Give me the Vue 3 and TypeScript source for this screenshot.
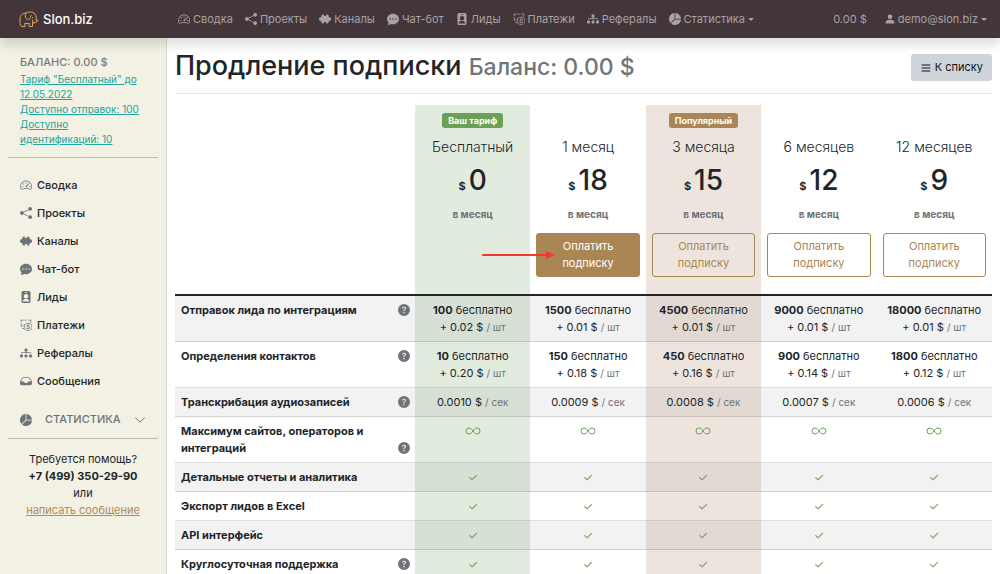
<script setup lang="ts">
import { h, type FunctionalComponent } from 'vue'

interface NavItem {
  icon: string
  label: string
}

interface Plan {
  title: string
  price: string
  badge?: string
  tone?: 'current' | 'popular'
  button?: 'solid' | 'outline'
}

interface Cell {
  amount?: string
  price?: string
  unit?: string
  icon?: string
}

interface Feature {
  title: string
  help?: boolean
  cells: Cell[]
}

const icons: Record<string, string> = {
  gauge:
    'M8 4a.5.5 0 0 1 .5.5V6a.5.5 0 0 1-1 0V4.5A.5.5 0 0 1 8 4zM3.732 5.732a.5.5 0 0 1 .707 0l.915.914a.5.5 0 1 1-.708.708l-.914-.915a.5.5 0 0 1 0-.707zM2 10a.5.5 0 0 1 .5-.5h1.586a.5.5 0 0 1 0 1H2.5A.5.5 0 0 1 2 10zm9.5 0a.5.5 0 0 1 .5-.5h1.5a.5.5 0 0 1 0 1H12a.5.5 0 0 1-.5-.5zm.754-4.246a.389.389 0 0 0-.527-.02L7.547 9.31a.91.91 0 1 0 1.302 1.258l3.434-4.297a.389.389 0 0 0-.029-.518zM0 10a8 8 0 1 1 15.547 2.661c-.442 1.253-1.845 1.602-2.932 1.25C11.309 13.488 9.475 13 8 13c-1.474 0-3.31.488-4.615.911-1.087.352-2.49.003-2.932-1.25A7.988 7.988 0 0 1 0 10zm8-7a7 7 0 0 0-6.603 9.329c.203.575.923.876 1.68.63C4.397 12.533 6.358 12 8 12s3.604.532 4.923.96c.757.245 1.477-.056 1.68-.631A7 7 0 0 0 8 3z',
  share:
    'M11 2.5a2.5 2.5 0 1 1 .603 1.628l-6.718 3.12a2.499 2.499 0 0 1 0 1.504l6.718 3.12a2.5 2.5 0 1 1-.488.876l-6.718-3.12a2.5 2.5 0 1 1 0-3.256l6.718-3.12A2.5 2.5 0 0 1 11 2.5z',
  puzzle:
    'M3 3.5 4.5 2h2v1.5c0 .7 3 .7 3 0V2h2L13 3.500v2h1.500c2 0 2 5 0 5H13v2L11.500 14h-2v-1.500c0-.7-3-.7-3 0V14h-2L3 12.500v-2H1.500c-2 0-2-5 0-5H3z',
  chat:
    'M16 8c0 3.866-3.582 7-8 7a9.06 9.06 0 0 1-2.347-.306c-.584.296-1.925.864-4.181 1.234-.2.032-.352-.176-.273-.362.354-.836.674-1.95.77-2.966C.744 11.37 0 9.76 0 8c0-3.866 3.582-7 8-7s8 3.134 8 7zM5 8a1 1 0 1 0-2 0 1 1 0 0 0 2 0zm4 0a1 1 0 1 0-2 0 1 1 0 0 0 2 0zm3 1a1 1 0 1 0 0-2 1 1 0 0 0 0 2z',
  lead:
    'M4 0a2 2 0 0 0-2 2v12a2 2 0 0 0 2 2h8a2 2 0 0 0 2-2V2a2 2 0 0 0-2-2H4zm2.500 1.500h3v1h-3zM8 4a3 3 0 1 1 0 6 3 3 0 0 1 0-6zm-4.500 9.500c.3-2.200 2.200-3 4.500-3s4.200.8 4.500 3v.5h-9z',
  payments:
    'M1 1h4v1H2v2H1zM6 1h3v1H6zM11 1h4v4h-1V2h-3zM1 5h1v4h3v1H1zM5 7h2v1H5zM6 11l2 1-2 2v-1H3v-1h3zM11 5a5.500 5.500 0 1 1 0 11 5.500 5.500 0 0 1 0-11zm0 1a4.500 4.500 0 1 0 0 9 4.500 4.500 0 0 0 0-9zm-.5.8h1v.8c1 .1 1.600.7 1.700 1.500h-1c-.2-.8-2.400-.8-2.400.2 0 1.200 3.600.3 3.600 2.500 0 1-.8 1.500-1.900 1.600v.8h-1v-.8c-1.100-.1-1.900-.7-2-1.700h1c.2 1.200 2.800 1.100 2.800.1 0-1.200-3.500-.4-3.500-2.500 0-.9.700-1.500 1.700-1.700z',
  tree:
    'M6 3.500A1.500 1.500 0 0 1 7.500 2h1A1.500 1.500 0 0 1 10 3.500v1A1.500 1.500 0 0 1 8.500 6v1H14a.5.5 0 0 1 .5.5v1a.5.5 0 0 1-1 0V8h-5v.5a.5.5 0 0 1-1 0V8h-5v.5a.5.5 0 0 1-1 0v-1A.5.5 0 0 1 2 7h5.500V6A1.500 1.500 0 0 1 6 4.500v-1zm-6 8A1.500 1.500 0 0 1 1.500 10h1A1.500 1.500 0 0 1 4 11.500v1A1.500 1.500 0 0 1 2.500 14h-1A1.500 1.500 0 0 1 0 12.500v-1zm6 0A1.500 1.500 0 0 1 7.500 10h1a1.500 1.500 0 0 1 1.500 1.500v1A1.500 1.500 0 0 1 8.500 14h-1A1.500 1.500 0 0 1 6 12.500v-1zm6 0a1.500 1.500 0 0 1 1.500-1.500h1a1.500 1.500 0 0 1 1.500 1.500v1a1.500 1.500 0 0 1-1.500 1.500h-1a1.500 1.500 0 0 1-1.500-1.500v-1z',
  pie:
    'M15.985 8.500H8.207l-5.500 5.500a8 8 0 0 0 13.277-5.500zM2 13.292A8 8 0 0 1 7.500.015v7.778l-5.500 5.500zM8.500.015V7.500h7.485A8.001 8.001 0 0 0 8.500.015z',
  inbox:
    'M4.500 3h7c.6 0 1.200.3 1.600.8L16 8.500V11a2.500 2.500 0 0 1-2.500 2.500h-11A2.500 2.500 0 0 1 0 11V8.500l2.900-4.700C3.300 3.300 3.900 3 4.500 3zm0 1c-.3 0-.6.1-.8.4L1.300 8.500h3.200c.7 0 .8.4 1 .8.8 1.800 4.200 1.800 5 0 .2-.4.3-.8 1-.8h3.200l-2.400-4.100c-.2-.3-.5-.4-.8-.4z',
  user:
    'M3 14s-1 0-1-1 1-4 6-4 6 3 6 4-1 1-1 1H3zm5-6a3 3 0 1 0 0-6 3 3 0 0 0 0 6z',
  list:
    'M2 12a.6.6 0 0 1 .6-.6h10.800a.6.6 0 0 1 0 1.200H2.600A.6.6 0 0 1 2 12zm0-4a.6.6 0 0 1 .6-.6h10.800a.6.6 0 0 1 0 1.200H2.600A.6.6 0 0 1 2 8zm0-4a.6.6 0 0 1 .6-.6h10.800a.6.6 0 0 1 0 1.200H2.600A.6.6 0 0 1 2 4z',
  help:
    'M16 8A8 8 0 1 1 0 8a8 8 0 0 1 16 0zM5.496 6.033h.825c.138 0 .248-.113.266-.25.09-.656.54-1.134 1.342-1.134.686 0 1.314.343 1.314 1.168 0 .635-.374.927-.965 1.371-.673.489-1.206 1.060-1.168 1.987l.003.217a.25.25 0 0 0 .25.246h.811a.25.25 0 0 0 .25-.25v-.105c0-.718.273-.927 1.010-1.486.609-.463 1.244-.977 1.244-2.056 0-1.511-1.276-2.241-2.673-2.241-1.267 0-2.655.59-2.750 2.286a.237.237 0 0 0 .241.247zm2.325 6.443c.61 0 1.029-.394 1.029-.927 0-.552-.42-.94-1.029-.94-.584 0-1.009.388-1.009.94 0 .533.425.927 1.010.927z',
  check:
    'M13.854 3.646a.5.5 0 0 1 0 .708l-7 7a.5.5 0 0 1-.708 0l-3.500-3.500a.5.5 0 1 1 .708-.708L6.500 10.293l6.646-6.647a.5.5 0 0 1 .708 0z',
  down:
    'M1.646 4.646a.5.5 0 0 1 .708 0L8 10.293l5.646-5.647a.5.5 0 0 1 .708.708l-6 6a.5.5 0 0 1-.708 0l-6-6a.5.5 0 0 1 0-.708z',
}

const Icon: FunctionalComponent<{ name: string }> = (props) =>
  h('svg', { viewBox: '0 0 16 16', fill: 'currentColor', 'aria-hidden': 'true' }, [
    h('path', { d: icons[props.name], 'fill-rule': 'evenodd' }),
  ])
Icon.props = ['name']

const sections: NavItem[] = [
  { icon: 'gauge', label: 'Сводка' },
  { icon: 'share', label: 'Проекты' },
  { icon: 'puzzle', label: 'Каналы' },
  { icon: 'chat', label: 'Чат-бот' },
  { icon: 'lead', label: 'Лиды' },
  { icon: 'payments', label: 'Платежи' },
  { icon: 'tree', label: 'Рефералы' },
]
const sideItems: NavItem[] = [...sections, { icon: 'inbox', label: 'Сообщения' }]

const plans: Plan[] = [
  { title: 'Бесплатный', price: '0', badge: 'Ваш тариф', tone: 'current' },
  { title: '1 месяц', price: '18', button: 'solid' },
  { title: '3 месяца', price: '15', badge: 'Популярный', tone: 'popular', button: 'outline' },
  { title: '6 месяцев', price: '12', button: 'outline' },
  { title: '12 месяцев', price: '9', button: 'outline' },
]

const priced = (unit: string, prices: string[], amounts: string[] = []): Cell[] =>
  prices.map((price, i) => ({ price, unit, amount: amounts[i] }))
const marks = (icon: string): Cell[] => plans.map(() => ({ icon }))

const features: Feature[] = [
  {
    title: 'Отправок лида по интеграциям',
    help: true,
    cells: priced('шт', ['0.02', '0.01', '0.01', '0.01', '0.01'], ['100', '1500', '4500', '9000', '18000']),
  },
  {
    title: 'Определения контактов',
    help: true,
    cells: priced('шт', ['0.20', '0.18', '0.16', '0.14', '0.12'], ['10', '150', '450', '900', '1800']),
  },
  {
    title: 'Транскрибация аудиозаписей',
    help: true,
    cells: priced('сек', ['0.0010', '0.0009', '0.0008', '0.0007', '0.0006']),
  },
  { title: 'Максимум сайтов, операторов и интеграций', help: true, cells: marks('infinity') },
  { title: 'Детальные отчеты и аналитика', cells: marks('check') },
  { title: 'Экспорт лидов в Excel', cells: marks('check') },
  { title: 'API интерфейс', cells: marks('check') },
  { title: 'Круглосуточная поддержка', help: true, cells: marks('check') },
]
</script>

<template>
  <div class="page">
    <header class="navbar">
      <a class="brand" href="#">
        <svg class="logo" viewBox="0 0 20 17" fill="none" stroke="currentColor" stroke-width="1" stroke-linecap="round" stroke-linejoin="round" aria-hidden="true">
          <path d="M7 2C3.500 2 1 4.500 1 8v3.500c0 2 .8 3.500 2 4h3v-3.500c1.200.8 3 .8 4.200 0v3.500h3.300v-4c2 .8 4.500.3 4.500-1.500M7 2c2-1.500 7-1.500 9 1 1.500 2 1.200 4 1.200 6M7 2c-1 1.500-1 4 .2 5.500 1.500 1.800 4 1 4.200-1 .1-1 0-1.500 1-2" />
          <path d="M13.500 6.500v.2M17.200 9c.3 1.500 1.800 1.200 2 .2M13.500 9c-.2 1.500.5 2.500 2 2.500" />
        </svg>
        Slon.biz
      </a>
      <nav class="top-nav">
        <a v-for="item in sections" :key="item.label" href="#"><Icon class="icon" :name="item.icon" />{{ item.label }}</a>
        <a href="#"><Icon class="icon" name="pie" />Статистика<i class="caret"></i></a>
      </nav>
      <div class="account">
        <a href="#">0.00 $</a>
        <a href="#"><Icon class="icon user" name="user" />demo@slon.biz<i class="caret"></i></a>
      </div>
    </header>

    <div class="body">
      <aside class="sidebar">
        <div class="balance">
          <div class="balance-title">БАЛАНС: 0.00 $</div>
          <a href="#">Тариф "Бесплатный" до 12.05.2022</a>
          <a href="#">Доступно отправок: 100</a>
          <a href="#">Доступно идентификаций: 10</a>
        </div>
        <nav class="side-nav">
          <a v-for="item in sideItems" :key="item.label" href="#"><Icon class="icon" :name="item.icon" />{{ item.label }}</a>
        </nav>
        <button class="stats" type="button">
          <Icon class="icon" name="pie" />
          <span>СТАТИСТИКА</span>
          <Icon class="icon" name="down" />
        </button>
        <div class="support">
          <div>Требуется помощь?</div>
          <strong>+7 (499) 350-29-90</strong>
          <div>или</div>
          <a href="#">написать сообщение</a>
        </div>
      </aside>

      <main class="content">
        <div class="heading">
          <h1>Продление подписки <small>Баланс: 0.00 $</small></h1>
          <button class="to-list" type="button"><Icon class="icon" name="list" />К списку</button>
        </div>

        <table class="plans">
          <colgroup>
            <col class="feature-col" />
            <col v-for="plan in plans" :key="plan.title" />
          </colgroup>
          <thead>
            <tr>
              <td></td>
              <th v-for="plan in plans" :key="plan.title" scope="col" :class="plan.tone">
                <div class="badge-line"><span v-if="plan.badge" class="badge">{{ plan.badge }}</span></div>
                <div class="plan-title">{{ plan.title }}</div>
                <div class="plan-price"><span>$</span>{{ plan.price }}</div>
                <div class="period">в месяц</div>
                <div v-if="plan.button" class="pay-wrap">
                  <button type="button" class="pay" :class="plan.button">Оплатить подписку</button>
                  <svg v-if="plan.button === 'solid'" class="arrow" viewBox="0 0 74 10" aria-hidden="true">
                    <path d="M1 5h66" stroke="#f3392b" stroke-width="2" stroke-linecap="round" />
                    <path d="M64 1l9 4-9 4z" fill="#f3392b" />
                  </svg>
                </div>
              </th>
            </tr>
          </thead>
          <tbody>
            <tr v-for="feature in features" :key="feature.title">
              <th scope="row">
                <div class="feature">
                  <span>{{ feature.title }}</span>
                  <Icon v-if="feature.help" class="icon" name="help" />
                </div>
              </th>
              <td v-for="(cell, i) in feature.cells" :key="i" :class="plans[i].tone">
                <div v-if="cell.amount"><b>{{ cell.amount }}</b> бесплатно</div>
                <div v-if="cell.price">{{ cell.amount ? '+ ' : '' }}{{ cell.price }} $ <small>/ {{ cell.unit }}</small></div>
                <Icon v-if="cell.icon === 'check'" class="mark" name="check" />
                <svg v-if="cell.icon === 'infinity'" class="mark infinity" viewBox="0 0 16 8" fill="none" aria-hidden="true">
                  <path d="M8 4C6.800 2 5.600 1 4 1a3 3 0 0 0 0 6c1.600 0 2.800-1 4-3s2.400-3 4-3a3 3 0 0 1 0 6c-1.600 0-2.800-1-4-3z" />
                </svg>
              </td>
            </tr>
          </tbody>
        </table>
      </main>
    </div>
  </div>
</template>

<style>
body {
  margin: 0;
}
</style>

<style scoped>
.page {
  display: flex;
  flex-direction: column;
  height: 100vh;
  overflow: hidden;
  font: 400 11px/17px Inter, 'Noto Sans', sans-serif;
  color: #212529;
  background: #fff;
}
.page *,
.page *::before {
  box-sizing: border-box;
}
button {
  font: inherit;
  cursor: pointer;
}
.icon {
  flex: none;
  width: 12px;
  height: 12px;
}

.navbar {
  position: relative;
  z-index: 2;
  flex: none;
  display: flex;
  align-items: center;
  height: 38px;
  padding-right: 13px;
  background: #43363a;
  box-shadow: 0 6px 12px rgba(0, 0, 0, 0.15);
}
.navbar a {
  display: flex;
  align-items: center;
  color: #a9a1a3;
  text-decoration: none;
  white-space: nowrap;
}
.navbar .brand {
  width: 178px;
  padding-left: 19px;
  gap: 4px;
  font-size: 13px;
  font-weight: 500;
  color: #fff;
}
.logo {
  width: 20px;
  height: 17px;
  color: #e5a45c;
}
.top-nav {
  display: flex;
  gap: 12px;
}
.top-nav .icon {
  margin-right: 3px;
}
.account {
  display: flex;
  gap: 17px;
  margin-left: auto;
}
.user {
  margin-right: 2px;
}
.caret {
  margin-left: 3px;
  border: 3px solid transparent;
  border-top-color: currentColor;
  border-bottom: 0;
}

.body {
  flex: 1;
  display: flex;
  min-height: 0;
}
.sidebar {
  flex: none;
  width: 167px;
  padding: 16px 8px 0;
  border-right: 1px solid #d9d8cf;
  background: #f2f1e3;
}
.balance {
  padding: 0 12px 10px;
  border-bottom: 1px solid #bcbbb1;
  font-size: 10px;
  line-height: 15px;
}
.balance-title {
  margin-bottom: 1px;
  font-size: 11px;
  line-height: 17px;
  font-weight: 500;
  color: #77797a;
}
.balance a {
  display: block;
  color: #20a599;
}
.side-nav {
  display: grid;
  padding: 13px 12px 0;
}
.side-nav a {
  display: flex;
  align-items: center;
  gap: 5px;
  height: 28px;
  font-weight: 500;
  color: #212529;
  text-decoration: none;
}
.side-nav .icon {
  color: #6d7378;
}
.stats {
  display: flex;
  align-items: center;
  width: 100%;
  margin-top: 6px;
  padding: 10px 12px;
  border: 0;
  border-bottom: 1px solid #bcbbb1;
  background: none;
  font-weight: 500;
  color: #6d7378;
}
.stats span {
  flex: 1;
  padding-left: 13px;
  text-align: left;
}
.support {
  padding-top: 12px;
  text-align: center;
}
.support a {
  color: #b08a5b;
}

.content {
  flex: 1;
  min-width: 0;
  padding: 10px 8px 0;
  overflow: hidden;
}
.heading {
  display: flex;
  align-items: center;
  justify-content: space-between;
  height: 46px;
  padding-bottom: 8px;
  border-bottom: 1px solid #e6e7e8;
}
h1 {
  margin: 0;
  font-size: 27px;
  line-height: 34px;
  font-weight: 500;
}
h1 small {
  font-size: 23px;
  color: #6f757a;
}
.to-list {
  display: flex;
  align-items: center;
  gap: 3px;
  margin-top: 2px;
  padding: 5px 9px;
  border: 0;
  border-radius: 3px;
  background: #ced4da;
  color: #101214;
}

.plans {
  width: 100%;
  margin-top: 11px;
  table-layout: fixed;
  border-spacing: 0;
}
.feature-col {
  width: 240px;
}
th,
td {
  padding: 6px 6px 5px;
  vertical-align: top;
  border-bottom: 1px solid rgba(0, 0, 0, 0.12);
}
td {
  text-align: center;
}
thead th,
thead td {
  height: 191px;
  padding: 8px 6px 15px;
  border-bottom: 2px solid #212529;
  font-weight: 400;
}
.current {
  background-color: #e1ecdf;
}
.popular {
  background-color: #ede5dd;
}
tbody tr:nth-child(odd) > * {
  background-image: linear-gradient(rgba(0, 0, 0, 0.05), rgba(0, 0, 0, 0.05));
}
.badge-line {
  display: flex;
  justify-content: center;
  height: 15px;
}
.badge {
  padding: 0 6px;
  border-radius: 3px;
  background: #6ba157;
  color: #fff;
  font-size: 9px;
  line-height: 15px;
  font-weight: 700;
}
.popular .badge {
  background: #a98653;
}
.plan-title {
  margin-top: 10px;
  font-size: 14px;
  line-height: 18px;
  font-weight: 300;
}
.plan-price {
  margin-top: 7px;
  font-size: 28px;
  line-height: 34px;
  font-weight: 500;
}
.plan-price span {
  margin-right: 3px;
  font-size: 11px;
  line-height: 1;
  font-weight: 700;
}
.period {
  margin-top: 10px;
  font-size: 10px;
  line-height: 15px;
  font-weight: 700;
  color: #6d7378;
}
.pay-wrap {
  position: relative;
  margin-top: 11px;
}
.pay {
  display: block;
  width: 100%;
  padding: 4px 20px;
  border: 1px solid #a98653;
  border-radius: 3px;
  background: transparent;
  color: #a98653;
}
.pay.solid {
  background: #a98653;
  color: #fff;
}
.arrow {
  position: absolute;
  top: 17px;
  left: -54px;
  width: 74px;
  height: 10px;
}
.feature {
  display: flex;
  align-items: flex-end;
  justify-content: space-between;
  gap: 8px;
  text-align: left;
  font-weight: 700;
}
.feature .icon {
  margin-bottom: 3px;
  margin-right: -1px;
  color: #6d7378;
}
b {
  font-weight: 700;
}
td small {
  font-size: 10px;
  line-height: 1;
  color: #6d7378;
}
.mark {
  display: block;
  width: 10px;
  height: 10px;
  margin: 4px auto 0;
  color: #6ba157;
  stroke: currentColor;
}
.infinity {
  width: 16px;
  height: 8px;
}
</style>
